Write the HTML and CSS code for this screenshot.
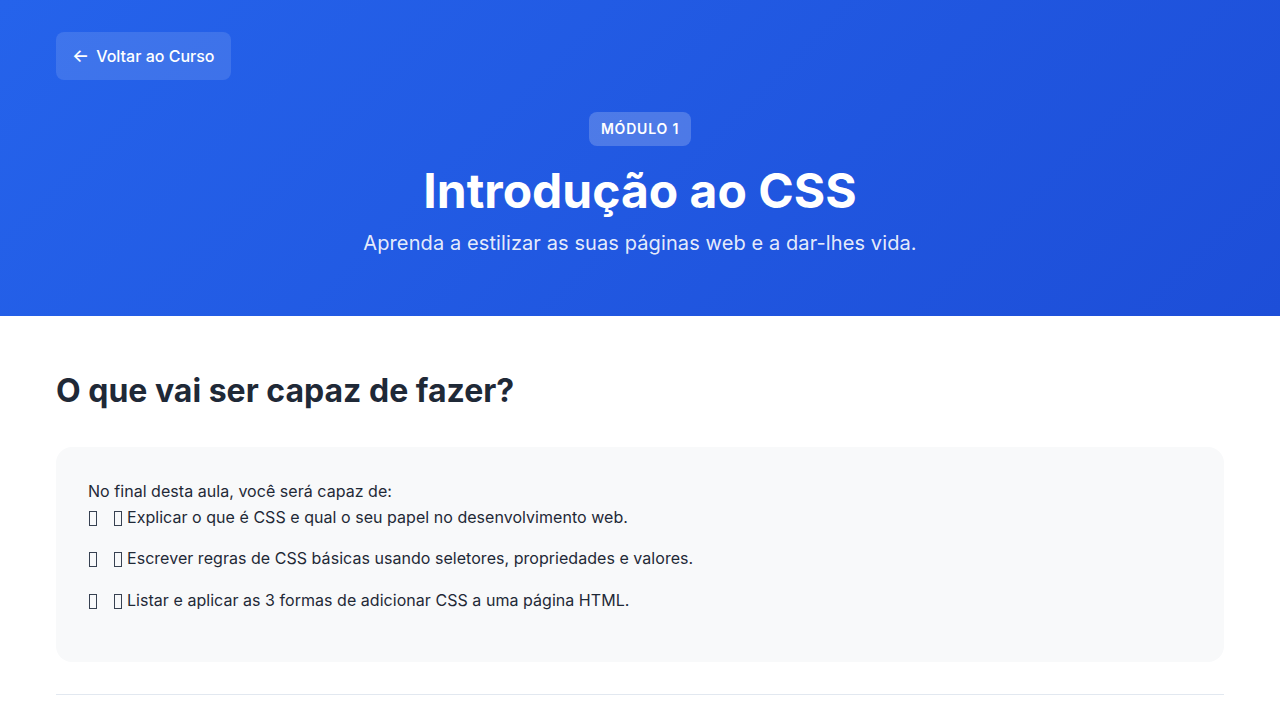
FILE: index.html
```html
<!DOCTYPE html>
<html lang="pt">
<head>
<meta charset="utf-8">
<title>Introdução ao CSS</title>
<link rel="stylesheet" href="styles.css">
</head>
<body>
<header class="hero">
  <a class="back-btn" href="#"><span class="arrow">←</span> Voltar ao Curso</a>
  <div class="hero-center">
    <span class="badge">MÓDULO 1</span>
    <h1 class="title">Introdução ao CSS</h1>
    <p class="subtitle">Aprenda a estilizar as suas páginas web e a dar-lhes vida.</p>
  </div>
</header>
<main class="content">
  <h2 class="section-title">O que vai ser capaz de fazer?</h2>
  <div class="card">
    <p class="intro">No final desta aula, você será capaz de:</p>
    <ul class="goals">
      <li><span class="tofu tofu-a"></span><span class="tofu tofu-b"></span>Explicar o que é CSS e qual o seu papel no desenvolvimento web.</li>
      <li><span class="tofu tofu-a"></span><span class="tofu tofu-b"></span>Escrever regras de CSS básicas usando seletores, propriedades e valores.</li>
      <li><span class="tofu tofu-a"></span><span class="tofu tofu-b"></span>Listar e aplicar as 3 formas de adicionar CSS a uma página HTML.</li>
    </ul>
  </div>
  <hr class="divider">
</main>
</body>
</html>
```

FILE: styles.css
```css
* { box-sizing: border-box; }
body {
  margin: 0;
  font-family: Inter, "Noto Sans", sans-serif;
  color: #1f2937;
  background: #ffffff;
}
.hero {
  background: linear-gradient(135deg, #2563eb 0%, #1d4ed8 100%);
  color: #ffffff;
  padding: 32px 56px 58px;
  height: 316px;
}
.back-btn {
  display: inline-flex;
  align-items: center;
  gap: 7px;
  height: 48px;
  padding: 0 16px;
  border-radius: 8px;
  background: rgba(255, 255, 255, 0.12);
  color: #ffffff;
  text-decoration: none;
  font-size: 16px;
  font-weight: 500;
}
.arrow { font-size: 18px; line-height: 1; }
.hero-center {
  display: flex;
  flex-direction: column;
  align-items: center;
  margin-top: 32px;
}
.badge {
  display: inline-block;
  padding: 6px 12px;
  line-height: 22px;
  font-size: 14px;
  font-weight: 600;
  letter-spacing: 0.8px;
  border-radius: 8px;
  background: rgba(255, 255, 255, 0.2);
}
.title {
  margin: 16px 0 0;
  font-size: 48px;
  line-height: 58px;
  font-weight: 700;
}
.subtitle {
  margin: 8px 0 0;
  font-size: 20px;
  line-height: 30px;
  letter-spacing: 0.1px;
  color: rgba(255, 255, 255, 0.9);
}
.content {
  padding: 56px 56px 0;
}
.section-title {
  margin: 0 0 37px;
  font-size: 32px;
  line-height: 38px;
  font-weight: 700;
  color: #1f2937;
}
.card {
  background: #f8f9fa;
  border-radius: 16px;
  padding: 32px 32px 33px;
  letter-spacing: 0.04px;
}
.intro {
  margin: 0;
  font-size: 16px;
  line-height: 25.6px;
}
.goals {
  list-style: none;
  margin: 0;
  padding: 0;
}
.goals li {
  font-size: 16px;
  line-height: 25.6px;
  margin-bottom: 16px;
}
.tofu {
  display: inline-block;
  width: 8px;
  height: 15px;
  border: 1px solid #374151;
  vertical-align: middle;
}
.tofu-a { margin: 0 17px 0 1px; }
.tofu-b { margin-right: 5px; }
.divider {
  margin: 32px 0 0;
  border: 0;
  border-top: 1px solid #e2e8f0;
}
```
